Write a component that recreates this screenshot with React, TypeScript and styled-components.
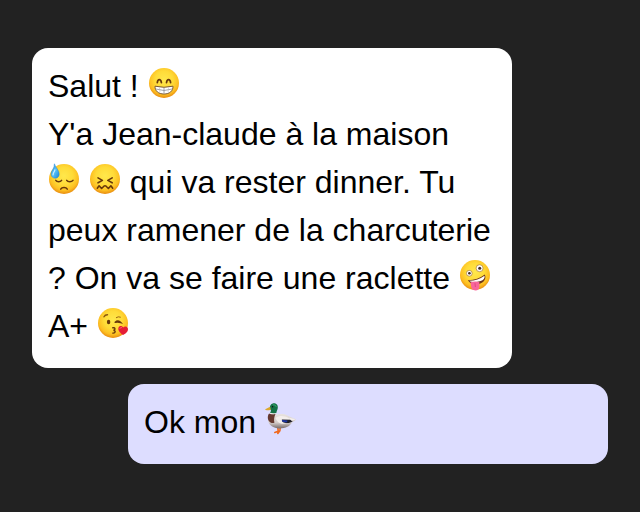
import React from "react";
import type { ReactNode } from "react";
import styled, { createGlobalStyle } from "styled-components";

const GlobalStyle = createGlobalStyle`
  * {
    box-sizing: border-box;
  }

  body {
    margin: 0;
    background: #222;
    color: #000;
    font-family: Helvetica, "Liberation Sans", Arial, sans-serif;
    font-size: 32px;
    line-height: 48px;
  }
`;

const Conversation = styled.main`
  display: flex;
  flex-direction: column;
  gap: 16px;
  padding: 48px 32px;
`;

const Message = styled.p<{ $mine?: boolean }>`
  width: calc(100% - 96px);
  margin: 0;
  padding: 14px 16px 18px;
  border-radius: 16px;
  align-self: ${({ $mine }) => ($mine ? "flex-end" : "flex-start")};
  background: ${({ $mine }) => ($mine ? "#ddf" : "#fff")};
`;

const Glyph = styled.svg`
  display: inline-block;
  width: 1em;
  height: 1em;
  vertical-align: -2px;
  overflow: visible;
`;

const INK = "#67370a";

type EmojiProps = { label: string; children: ReactNode };

function Emoji({ label, children }: EmojiProps) {
  return (
    <Glyph viewBox="0 0 32 32" role="img" aria-label={label}>
      {children}
    </Glyph>
  );
}

function Face({ label, children }: EmojiProps) {
  const id = React.useId();
  return (
    <Emoji label={label}>
      <defs>
        <radialGradient id={id} cx="0.5" cy="0.4" r="0.6">
          <stop offset="0" stopColor="#ffe84c" />
          <stop offset="0.5" stopColor="#ffdb38" />
          <stop offset="0.8" stopColor="#fdbf22" />
          <stop offset="1" stopColor="#e88b10" />
        </radialGradient>
      </defs>
      <circle cx="16" cy="16" r="15" fill={`url(#${id})`} />
      {children}
    </Emoji>
  );
}

function Beaming() {
  return (
    <Face label="😁">
      <g fill="none" stroke={INK} strokeWidth="1.7" strokeLinecap="round">
        <path d="M9.3 15.6C9.8 11.6 12.8 11.6 13.4 15.6" />
        <path d="M18.5 15.6C19.1 11.6 22.1 11.6 22.6 15.6" />
      </g>
      <path
        d="M7 19.2Q16 21.4 25 19.2C25.2 24 21.5 27 16 27S6.8 24 7 19.2Z"
        fill="#fff"
        stroke="#7d5a35"
        strokeWidth="1"
        strokeLinejoin="round"
      />
      <path
        d="M7.8 22Q16 25 24.2 22M16 21V26"
        fill="none"
        stroke="#8e8f95"
        strokeWidth="0.8"
      />
      <path
        d="M11.4 20.6L12 25.2M20.6 20.6L20 25.2"
        fill="none"
        stroke="#b5b6bb"
        strokeWidth="0.5"
      />
    </Face>
  );
}

function Downcast() {
  const id = React.useId();
  return (
    <Face label="😓">
      <defs>
        <linearGradient id={id} x1="0" y1="0" x2="1" y2="1">
          <stop offset="0" stopColor="#2a8be0" />
          <stop offset="0.5" stopColor="#58c1f8" />
          <stop offset="1" stopColor="#1c83d4" />
        </linearGradient>
      </defs>
      <g fill="none" stroke={INK} strokeWidth="1.5" strokeLinecap="round">
        <path d="M7.8 17.4C9 19.4 12.4 19.3 13.6 17.4" />
        <path d="M18.7 17.4C19.9 19.3 23.5 19.4 25 17.4" />
        <path d="M12.7 26.2C14 24 18 24 19.3 26.2" />
      </g>
      <path
        d="M6.4 0.8C7.6 4.8 11.4 7.4 11.2 11.3C11 13.9 9.2 15.2 7.2 15.2C4.9 15.2 3.1 13.6 3.1 11.1C3.1 7.6 6.6 5.6 6.4 0.8Z"
        fill={`url(#${id})`}
        stroke="#2187d6"
        strokeWidth="0.5"
      />
      <path
        d="M6.9 6.8C6.8 8.8 4.9 9.4 5.1 11.8"
        fill="none"
        stroke="#c8efff"
        strokeWidth="1.2"
        strokeLinecap="round"
      />
    </Face>
  );
}

function Confounded() {
  return (
    <Face label="😖">
      <g
        fill="none"
        stroke={INK}
        strokeWidth="1.6"
        strokeLinecap="round"
        strokeLinejoin="round"
      >
        <path d="M9 14.9L13.4 17.4L9 19.8" />
        <path d="M23.2 14.9L18.8 17.4L23.2 19.8" />
        <path d="M8.3 25.2L10.1 22.8L12.6 25.5L14.9 23.2Q16 22.3 17.1 23.2L19.4 25.5L21.9 22.8L23.7 25.2" />
      </g>
    </Face>
  );
}

function Zany() {
  return (
    <Face label="🤪">
      <circle cx="10.3" cy="14.3" r="2.9" fill="#fff" stroke="#a87838" strokeWidth="0.7" />
      <circle cx="20.6" cy="9.2" r="3.5" fill="#fff" stroke="#a87838" strokeWidth="0.7" />
      <circle cx="10.4" cy="14.2" r="1.3" fill="#3e2a20" />
      <circle cx="20.7" cy="9.2" r="1.5" fill="#3e2a20" />
      <path
        d="M8.8 21.2Q18.5 21.3 25.8 15.6C27.6 19.6 25.2 23.5 20.8 24.8C16 26.2 11.2 25.2 8.8 21.2Z"
        fill="#6d3519"
      />
      <path
        d="M10.2 21.7Q19 21.6 25.5 16.7C26.1 19.3 24.4 21.1 21.6 22C17.5 23.5 12.8 23.6 10.2 21.7Z"
        fill="#fff"
      />
      <path
        d="M11.6 23.3C14.4 22.3 17.6 22.3 20.3 23.1L20.5 26.4C20.6 29.8 18.9 31.4 16.4 31.4C13.6 31.4 12.2 29.7 12 27Z"
        fill="#f8669b"
      />
      <path d="M16 24.2L16.4 28" stroke="#d63e78" strokeWidth="0.7" />
    </Face>
  );
}

function Kiss() {
  return (
    <Face label="😘">
      <g fill="none" stroke={INK} strokeWidth="1.4" strokeLinecap="round">
        <path d="M7 9.8Q8.1 7.7 10.5 7.8" stroke="#8b560f" />
        <path d="M19.3 10.6Q21.2 9.1 23.4 10.1" stroke="#9b6411" strokeWidth="1" />
        <path d="M18.2 15.3Q21 12.6 23.8 15.6Q21.1 14.8 18.2 15.3" />
        <path d="M15.8 20.8C18.3 20.2 18.8 22.6 16.5 23.2C19 23.6 18.6 26.4 15.8 26.1" />
      </g>
      <ellipse cx="11.6" cy="15" rx="1.7" ry="2.3" fill={INK} />
      <path
        d="M26.1 28C23.9 26.2 20.6 23.8 21.4 20.9C22.1 18.5 25.1 18.5 26.1 20.6C27.8 18.5 30.9 19.4 31 21.9C31 25.2 28.1 26.5 26.1 28Z"
        fill="#e51d36"
      />
      <path
        d="M23 21.3Q23.4 20.3 24.4 20.5"
        stroke="#ff7382"
        strokeWidth="0.9"
        fill="none"
        strokeLinecap="round"
      />
    </Face>
  );
}

function Duck() {
  const id = React.useId();
  return (
    <Emoji label="🦆">
      <defs>
        <linearGradient id={id} x1="0" y1="0" x2="0" y2="1">
          <stop offset="0" stopColor="#e9e3df" />
          <stop offset="0.6" stopColor="#d3cbc9" />
          <stop offset="1" stopColor="#766b6b" />
        </linearGradient>
      </defs>
      <path
        d="M12.8 24L13.2 28.2L9.8 29.4M15.2 24L14.9 27.8L12.8 30.4"
        fill="none"
        stroke="#f0681c"
        strokeWidth="1.6"
        strokeLinecap="round"
        strokeLinejoin="round"
      />
      <path
        d="M6.6 11C10.6 12.2 13.3 10.8 17.5 11.1C22.5 11.5 25.6 14.8 31 16.2C30 18 28.2 18.6 27 19.2C25.4 23 20.6 25.4 14.6 25.4C8.3 25.4 3.3 22 3 16.5Z"
        fill={`url(#${id})`}
      />
      <path
        d="M4.1 10.4Q7.8 12 10.6 10.7C9.1 13.4 8.7 16.8 9.4 19.8C6.6 21 2.8 18.6 2.8 14.5C2.8 12.8 3.3 11.4 4.1 10.4Z"
        fill="#65382f"
      />
      <path d="M4.6 9.8Q8 11.6 11.3 10" fill="none" stroke="#f4f1e9" strokeWidth="1" />
      <path
        d="M5 5.2C4.5 2.5 6.5 0.3 9 0.3C11.8 0.3 13.3 2.8 12.7 5.4C12.3 7.1 11.4 8.1 11.5 9.7Q8.1 11 4.8 9.5C6.2 8.5 6.5 7.5 5.2 6.6Z"
        fill="#147247"
      />
      <path d="M7.9 1.7Q10.7 1.4 11.4 4" fill="none" stroke="#36a66c" strokeWidth="1" />
      <circle cx="7.6" cy="3.8" r="0.7" fill="#111" />
      <path d="M5.2 3.8C3.8 4 2.7 5.6 0.1 6.2C0.5 7.6 3.7 7.4 5.7 6.7Z" fill="#dba92d" />
      <path d="M10.6 15C14.4 11.7 21 12.7 25.2 16C22.4 22 13.6 23.2 10.6 15Z" fill="#f3eeec" />
      <path d="M16.8 16.6L26 16.7L27.6 18.3C25.1 20.5 20.6 20.8 17.4 18.7Z" fill="#20202b" />
      <path d="M16.8 16.9L22.5 17.4L22 19.3Q19.1 19.6 17.3 18.6Z" fill="#1d35a5" />
      <path d="M24 14.8L31 16.2L26.3 17.8Z" fill="#f3efed" />
    </Emoji>
  );
}

export default function App() {
  return (
    <>
      <GlobalStyle />
      <Conversation>
        <Message>
          Salut ! <Beaming />
          <br />
          Y'a Jean-claude à la maison
          <br />
          <Downcast /> <Confounded /> qui va rester dinner. Tu peux ramener de la
          charcuterie ? On va se faire une raclette <Zany />
          <br />
          A+ <Kiss />
        </Message>
        <Message $mine>
          Ok mon <Duck />
        </Message>
      </Conversation>
    </>
  );
}
